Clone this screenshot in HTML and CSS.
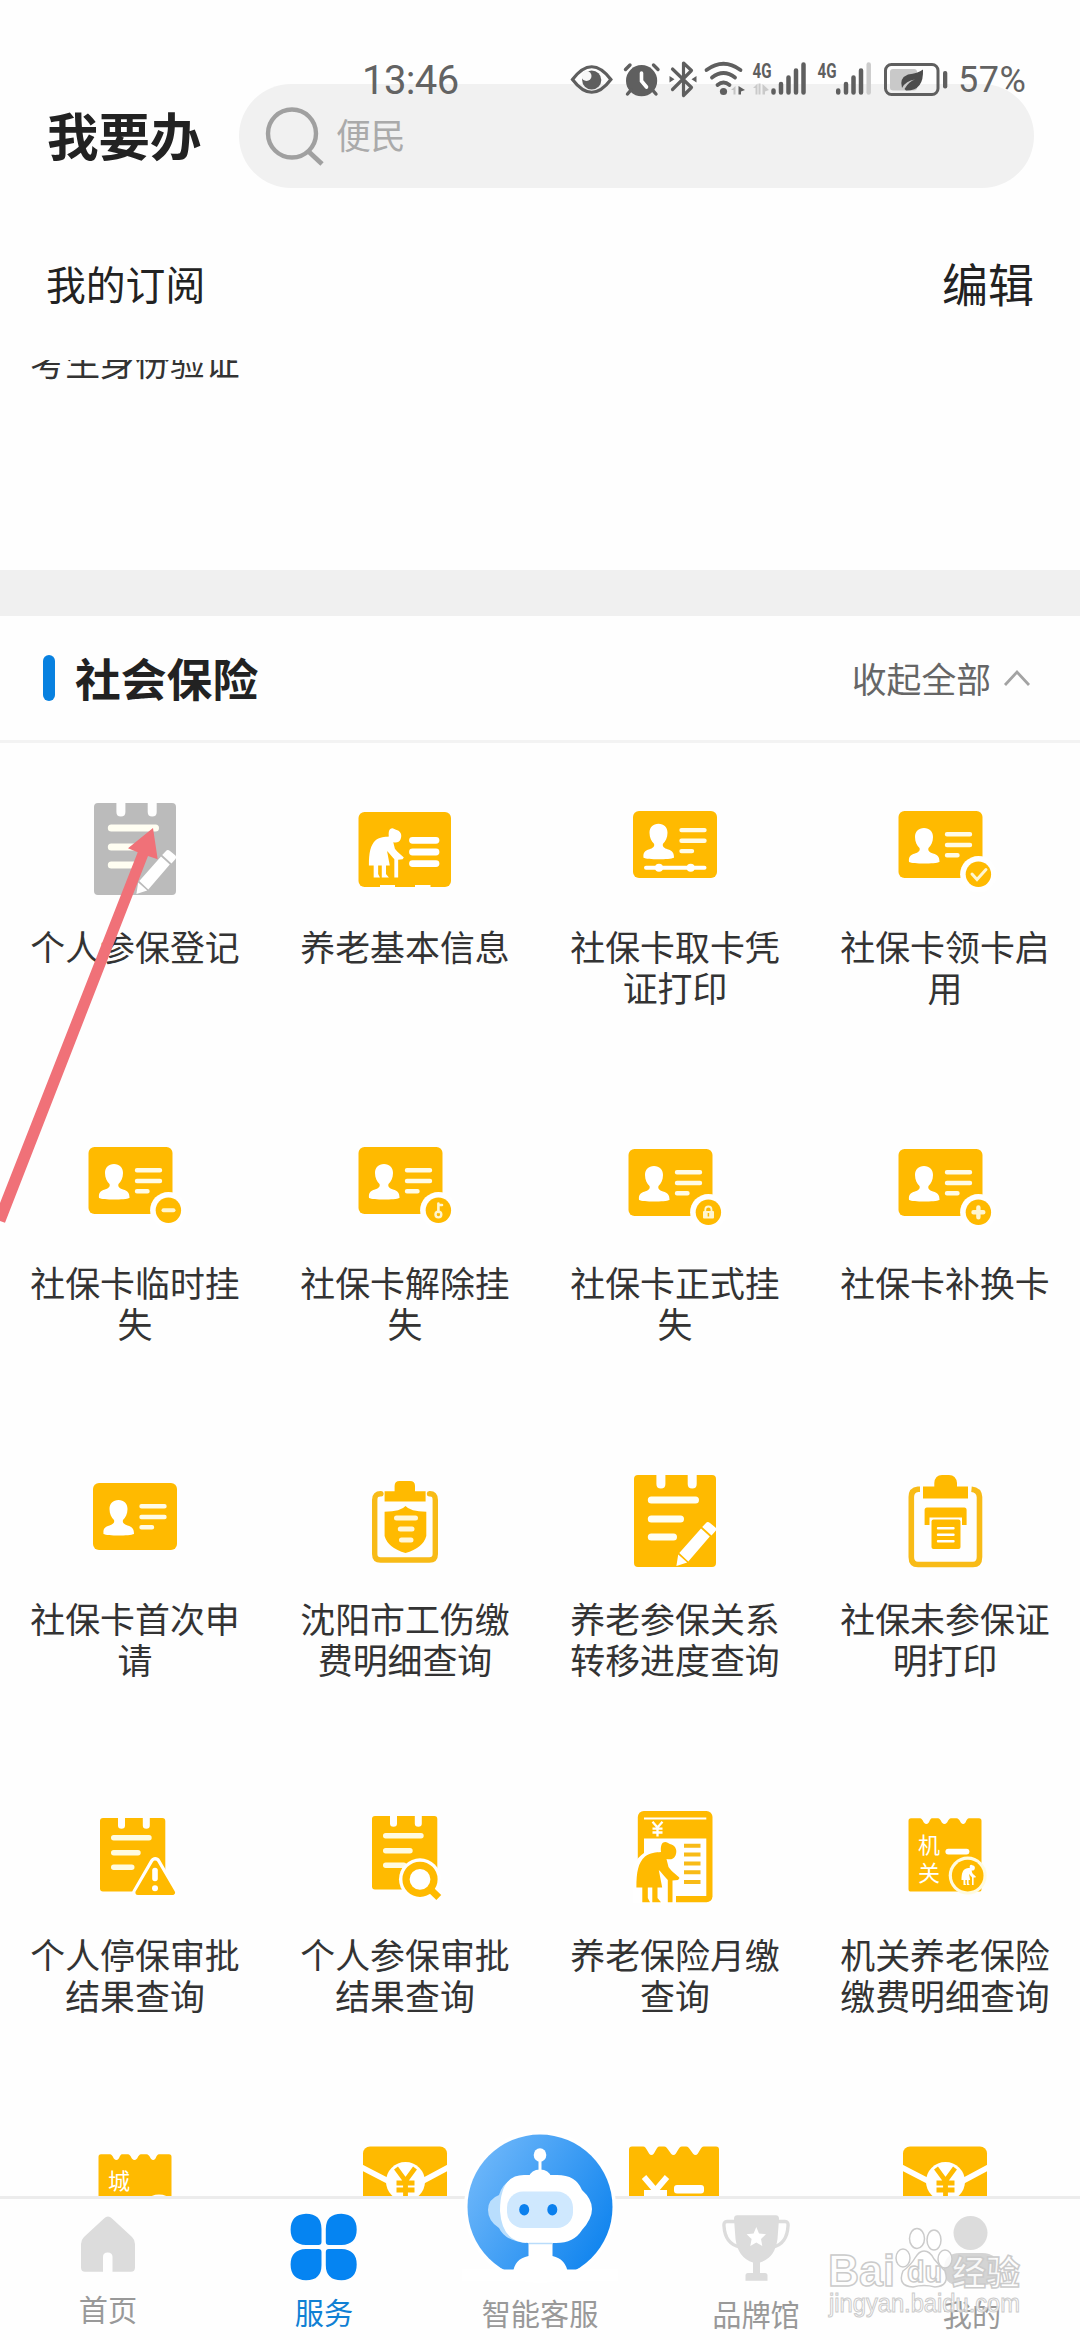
FILE: index.html
```html
<!DOCTYPE html>
<html lang="zh-CN">
<head>
<meta charset="utf-8">
<title>我要办</title>
<link rel="stylesheet" href="styles.css">
</head>
<body>
<svg class="defs" width="0" height="0" aria-hidden="true">
  <defs>
    <path id="bust" d="M26 25C31.500 25 35 28.500 35 34C35 39 33 42.500 30.500 45C29.500 48 32 49.500 35 50.500C40 52 41.500 54 41.500 59C37 61 15 61 11 59C10.500 54 12 52 17 50.500C20 49.500 22.500 48 21.500 45C19 42.500 17 39 17 34C17 28.500 20.500 25 26 25Z"/>
    <path id="idlines" d="M49 31.300H72M49 42H72M49 52.300H59.500" fill="none" stroke="#fffbe6" stroke-width="4.400" stroke-linecap="round"/>
    <g id="idcard">
      <rect x=".5" y="8" width="84" height="67" rx="6" fill="#ffba00"/>
      <use href="#bust" fill="#fff"/><use href="#idlines"/>
    </g>
    <g id="badge">
      <circle cx="80.400" cy="71.300" r="18.300" fill="#fff"/>
      <circle cx="80.400" cy="71.300" r="12.700" fill="#ffba00"/>
    </g>
    <path id="elder" d="M37.500 32C40 32.500 41 34 43.500 34.500C48 36 49.500 41 47.500 45.500C46 49 42.500 50 38.500 49L40.500 57C44 62 49 65 51.500 68L50 70L44.500 70.500V92.300H39.800V70C36 66 33 62 30.800 60L34.200 77.600H29.500V88L33 92.300H24.300V77.600H19.800V88L22 92.300H14.300V77.600H8.400C8.500 62 10 53 17 46.500C22 42.500 28 42.500 33 42C32.500 37 33 32 37.500 32Z"/>
    <g id="notepad">
      <path d="M10 0H28.400V9Q28.400 13.500 32.900 13.500T37.400 9V0H59.700V9Q59.700 13.500 64.200 13.500T68.700 9V0H84Q88 0 88 4V88Q88 92 84 92H10Q6 92 6 88V4Q6 0 10 0Z"/>
      <path d="M23.300 25H67.500M23.300 44H52.500M23.300 62H45.500" fill="none" stroke="#fffef2" stroke-width="7" stroke-linecap="round"/>
      <path d="M50.200 79.500L59.200 87.500L48.400 91ZM51.300 78L73 53.500L81.800 61.500L60.300 86.500ZM74.200 52L78 48Q79.500 46 82 48L87.500 52.500Q89 54 87.500 56L83.500 60.500Z" fill="#fff"/>
    </g>
    <path id="smallpad" d="M15 8H30V15.500Q30 18.800 33.500 18.800T37 15.500V8H54.800V15.500Q54.800 18.800 58.300 18.800T61.800 15.500V8H74.300Q77.300 8 77.300 11V78.500Q77.300 81.500 74.300 81.500H15Q12 81.500 12 78.500V11Q12 8 15 8Z" fill="#ffba00"/>
    <path id="smalllines" d="M25.700 27.700H61M25.700 42.700H50M25.700 57.300H43.800" fill="none" stroke="#fffbe0" stroke-width="5.400" stroke-linecap="round"/>
    <path id="ticket" d="M13 8.300H22C25 8.300 25 14 28.400 14S31.500 8.300 34 8.300H40C43 8.300 43 14 46.500 14S50 8.300 53 8.300H58.500C62 8.300 62 14 65.200 14S68 8.300 71 8.300H81Q83.500 8.300 83.500 11V79Q83.500 81.600 81 81.600H13Q10.500 81.600 10.500 79V11Q10.500 8.300 13 8.300Z" fill="#ffba00"/>
    <g id="envelope">
      <rect x="5" y=".5" width="84" height="90" rx="7" fill="#ffba00"/>
      <path d="M3 21L32 36M91 21L63 36" stroke="#fff" stroke-width="5.500"/>
      <circle cx="47.500" cy="35.500" r="19.500" fill="#fff"/>
      <path d="M38 22L47.500 35L57 22M38.500 37H56.500M38.500 44H56.500M47.500 35V52" fill="none" stroke="#ffba00" stroke-width="4.800"/>
    </g>
    <linearGradient id="ball" x1="0" y1=".2" x2="1" y2=".8"><stop offset="0" stop-color="#70b8fa"/><stop offset="1" stop-color="#0c82ee"/></linearGradient>
  </defs>
</svg>

<div class="screen">
  <header class="top">
    <h1 class="title">我要办</h1>
    <div class="search">
      <svg class="search-icon" viewBox="0 0 60 60"><circle cx="27" cy="27.500" r="24" fill="none" stroke="#a0a0a0" stroke-width="4.400"/><path d="M43 45L57 58" stroke="#a0a0a0" stroke-width="4.800"/></svg>
      <span>便民</span>
    </div>
  </header>
  <div class="subs"><span class="subs-name">我的订阅</span><span class="subs-edit">编辑</span></div>
  <div class="subs-list"><p class="label subs-item">考生身份验证</p></div>
  <div class="band"></div>
  <div class="head">
    <span class="mark"></span>
    <h2>社会保险</h2>
    <span class="fold">收起全部</span>
    <svg class="chev" viewBox="0 0 28 18"><path d="M2 16L14 3L26 16" fill="none" stroke="#a3a3a3" stroke-width="2.800"/></svg>
  </div>

  <main class="grid">
    <div class="cell"><svg class="ico" viewBox="0 0 94 94"><use href="#notepad" fill="#bbb"/></svg><p class="label">个人参保登记</p></div>
    <div class="cell"><svg class="ico" viewBox="0 0 94 94"><rect x=".5" y="9" width="92.500" height="75" rx="6" fill="#ffba00"/><use href="#elder" fill="#fff" transform="translate(4.100 -.8) scale(.81 .815)"/><path d="M54.500 37.300H78M54.500 49H78M54.500 60.600H78" stroke="#fff" stroke-width="6.800" stroke-linecap="round"/><path d="M22 83.300H37M57 83.300H72.500" stroke="#fff" stroke-width="2.600"/></svg><p class="label">养老基本信息</p></div>
    <div class="cell"><svg class="ico" viewBox="0 0 94 94"><rect x="5" y="8" width="84" height="67" rx="6" fill="#ffba00"/><g transform="translate(4.500 -4.200)"><use href="#bust" fill="#fff"/><use href="#idlines"/></g><path d="M18 64.800H76.500" stroke="#fff" stroke-width="4" stroke-linecap="round"/><circle cx="31" cy="64.800" r="4" fill="#fff"/><circle cx="62.700" cy="64.800" r="4" fill="#fff"/></svg><p class="label">社保卡取卡凭证打印</p></div>
    <div class="cell"><svg class="ico" viewBox="0 0 94 94"><use href="#idcard"/><use href="#badge"/><path d="M74 71L79 76.500L88 66.500" fill="none" stroke="#fff6cf" stroke-width="3" stroke-linecap="round"/></svg><p class="label">社保卡领卡启用</p></div>

    <div class="cell"><svg class="ico" viewBox="0 0 94 94"><use href="#idcard"/><use href="#badge"/><path d="M75.500 71.300H85.500" stroke="#fff6cf" stroke-width="4" stroke-linecap="round"/></svg><p class="label">社保卡临时挂失</p></div>
    <div class="cell"><svg class="ico" viewBox="0 0 94 94"><use href="#idcard"/><use href="#badge"/><path d="M80.400 64.500V73M81 66H84" stroke="#fff6cf" stroke-width="2.600" stroke-linecap="round"/><circle cx="80.400" cy="75.500" r="2.900" fill="none" stroke="#fff6cf" stroke-width="2.400"/></svg><p class="label">社保卡解除挂失</p></div>
    <div class="cell"><svg class="ico" viewBox="0 -2 94 94"><use href="#idcard"/><use href="#badge"/><rect x="75" y="70" width="11" height="7.500" rx="1" fill="#fff6cf"/><path d="M77.300 70V68.500Q77.300 65.500 80.400 65.500T83.500 68.500V70" fill="none" stroke="#fff6cf" stroke-width="1.800"/><path d="M80.400 72V75.500" stroke="#ffba00" stroke-width="1.500"/></svg><p class="label">社保卡正式挂失</p></div>
    <div class="cell"><svg class="ico" viewBox="0 -2 94 94"><use href="#idcard"/><use href="#badge"/><path d="M75.500 71.300H85.300M80.400 66.400V76.200" stroke="#fff6cf" stroke-width="4.400" stroke-linecap="round"/></svg><p class="label">社保卡补换卡</p></div>

    <div class="cell"><svg class="ico" viewBox="-4.500 0 94 94"><use href="#idcard"/></svg><p class="label">社保卡首次申请</p></div>
    <div class="cell"><svg class="ico" viewBox="0 0 94 94"><path d="M23 18.800Q16.700 18.500 16.700 25V79Q16.700 85 22.500 85H71.500Q77.300 85 77.300 79V25Q77.300 18.500 71.500 18.800" fill="none" stroke="#f8bb17" stroke-width="5.400" stroke-linecap="round"/><path d="M26.600 16.300H36.600V11Q36.600 6 41.600 6H52Q57 6 57 11V16.300H67.600V26.500H26.600Z" fill="#ffba00"/><path d="M47.500 31Q52 36.500 68.300 36.800V61Q65 73 47.500 78Q30 73 26.600 61V36.800Q43 36.500 47.500 31Z" fill="#ffba00"/><path d="M38.500 43H57.500M42.300 54H54M43.500 65H53" stroke="#fff6d8" stroke-width="5" stroke-linecap="round"/></svg><p class="label">沈阳市工伤缴费明细查询</p></div>
    <div class="cell"><svg class="ico" viewBox="0 0 94 94"><use href="#notepad" fill="#ffba00"/></svg><p class="label">养老参保关系转移进度查询</p></div>
    <div class="cell"><svg class="ico" viewBox="0 0 94 94"><path d="M22 14.300H20Q13.300 15 13.300 22V82Q13.300 89.500 20 89.500H75Q81.500 89.500 81.500 82V22Q81 15 73.500 14.300" fill="none" stroke="#f8bb17" stroke-width="5.600"/><path d="M25 11.500H36.300V8Q37 0 44 0H51Q58 0 59 8V11.500H70V23.400H25Z" fill="#ffba00"/><path d="M29 32.400H66.300Q68.600 32.400 68.600 35V50H64V42.400H31.500V50H26.600V35Q26.600 32.400 29 32.400Z" fill="#ffba00"/><rect x="33.500" y="44.400" width="29" height="29.600" rx="2" fill="#ffba00"/><path d="M40 53.300H55.500M40 59.800H55.500M40 66.300H55.500" stroke="#fff" stroke-width="2.400" stroke-linecap="round"/></svg><p class="label">社保未参保证明打印</p></div>

    <div class="cell"><svg class="ico" viewBox="0 0 94 94"><use href="#smallpad"/><use href="#smalllines"/><path d="M67.200 52.500L84.800 83H49.600Z" fill="#fff" stroke="#fff" stroke-width="11" stroke-linejoin="round"/><path d="M67.200 53L84.500 82.500H49.900Z" fill="#ffba00" stroke="#ffba00" stroke-width="5" stroke-linejoin="round"/><path d="M67 60.500V68.500" stroke="#fff" stroke-width="5.600" stroke-linecap="round"/><circle cx="67" cy="78.300" r="3" fill="#fff"/></svg><p class="label">个人停保审批结果查询</p></div>
    <div class="cell"><svg class="ico" viewBox="0 0 94 94"><g transform="translate(2 -2)"><use href="#smallpad"/><use href="#smalllines"/></g><circle cx="62" cy="69.300" r="21" fill="#fff"/><path d="M73 80L80 87" stroke="#fff" stroke-width="13"/><circle cx="62" cy="69.300" r="14" fill="#fff" stroke="#ffba00" stroke-width="7.200"/><path d="M73 80L80.800 87.500" stroke="#ffba00" stroke-width="7"/></svg><p class="label">个人参保审批结果查询</p></div>
    <div class="cell"><svg class="ico" viewBox="0 0 94 94"><rect x="9.800" y="1" width="74.700" height="91.300" rx="6" fill="#ffba00"/><path d="M16 8.500H78.300" stroke="#fff" stroke-width="2"/><path d="M24.500 11.800L29.500 17.500L34.500 11.800M24.500 18.700H34.500M24.500 22.500H34.500M29.500 17V26.500" fill="none" stroke="#fff" stroke-width="2.300"/><path d="M16 28.600H78.300V86H48V93H5V55Q10 47 16 43Z" fill="#fff"/><use href="#elder" fill="#ffba00"/><path d="M56 35.700H72.500M56 44.600H72.500M56 53.600H72.500M56 62.300H72.500M56 72H72.500" stroke="#f8bb17" stroke-width="4"/></svg><p class="label">养老保险月缴查询</p></div>
    <div class="cell"><svg class="ico" viewBox="0 0 94 94"><use href="#ticket"/><text class="glyph" x="20" y="43">机</text><text class="glyph" x="20" y="70.500">关</text><path d="M50.300 41.600H68.500" stroke="#fff" stroke-width="5.800" stroke-linecap="round"/><circle cx="69.700" cy="65.600" r="19" fill="#fffbe0"/><circle cx="69.700" cy="65.600" r="15.800" fill="#ffba00"/><use href="#elder" fill="#fff" transform="translate(60.700 44) scale(.335)"/></svg><p class="label">机关养老保险缴费明细查询</p></div>

    <div class="cell"><svg class="ico" viewBox="0 0 94 94"><use href="#ticket"/><text class="glyph" x="20" y="43.300">城</text><circle cx="71" cy="67.500" r="19" fill="#fff"/></svg></div>
    <div class="cell"><svg class="ico" viewBox="0 0 94 94"><use href="#envelope"/></svg></div>
    <div class="cell"><svg class="ico" viewBox="0 0 94 94"><path d="M4 .5H15C19 .5 20 9 23.500 9S28 .5 31.500 .5H36C40 .5 42 9 45.500 9S50 .5 54 .5H58C62 .5 64 9 67.500 9S72 .5 76 .5H88Q91 .5 91 3.500V92H1V3.500Q1 .5 4 .5Z" fill="#ffba00"/><path d="M16 31L27.500 44.500L39 31M16 47H39M27.500 44V60" fill="none" stroke="#fff" stroke-width="5.800"/><rect x="46" y="39" width="30" height="8.500" rx="3" fill="#fff"/></svg></div>
    <div class="cell"><svg class="ico" viewBox="0 0 94 94"><use href="#envelope"/></svg></div>
  </main>

  <nav class="nav">
    <div class="tab tab-home"><svg class="tab-ico" viewBox="0 0 72 84"><path d="M36 15.500Q38 15.500 40 17.500L60 36Q63 39 63 43V66.500Q63 70.700 59 70.700H40.500V56Q40.500 51.500 35.700 51.500T31 56V70.700H13Q9 70.700 9 66.500V43Q9 39 12 36L32 17.500Q34 15.500 36 15.500Z" fill="#dcdcdc"/></svg><span>首页</span></div>
    <div class="tab tab-on"><svg class="tab-ico" viewBox="0 0 72 84" fill="#0584f2"><path d="M18 12.700Q33.500 12.700 33.500 28V41Q33.500 44 30.500 44H18Q2.600 43.500 2.600 28.500T18 12.700ZM53.500 12.700Q37.800 12.700 37.800 28V41Q37.800 44 40.800 44H53.500Q68.700 43.500 68.700 28.500T53.500 12.700ZM18 79.300Q33.500 79.300 33.500 64V51Q33.500 48 30.500 48H18Q2.600 48.500 2.600 63.500T18 79.300ZM53.500 79.300Q37.800 79.300 37.800 64V51Q37.800 48 40.800 48H53.500Q68.700 48.500 68.700 63.500T53.500 79.300Z"/></svg><span>服务</span></div>
    <div class="tab tab-bot"><svg class="bot" viewBox="0 0 156 150"><circle cx="78" cy="78" r="76" fill="#fff"/><circle cx="78" cy="78" r="72.500" fill="url(#ball)"/><ellipse cx="78" cy="26" rx="6.300" ry="6.800" fill="#fff"/><path d="M78 30V46" stroke="#fff" stroke-width="3"/><path d="M67 48Q69 40.500 78 40.500T89 48Z" fill="#fff"/><path d="M37 66Q26 70 26 81T37 99Q43 112 64 114V48Q42 48 37 66Z" fill="#b9defd"/><path d="M62 46H95Q114 46 120 61Q130 70 130 80T120 101Q112 114 94 114H67Q40 114 38 82Q38 46 62 46Z" fill="#fff"/><rect x="45" y="62.500" width="66" height="36.500" rx="16" fill="#cfe8fe"/><ellipse cx="62.200" cy="80.700" rx="5" ry="5.800" fill="#0b80ee"/><ellipse cx="90.300" cy="80.700" rx="5" ry="5.800" fill="#0b80ee"/><path d="M66.500 113H90.500V127Q104 130 106 144.500V151H51V144.500Q52 130 66.500 127Z" fill="#fff"/><path d="M67 114.500H90.500" stroke="#b9dcfb" stroke-width="1.500"/><path d="M0 140.500H156V152H0Z" fill="#fff"/></svg><span>智能客服</span></div>
    <div class="tab tab-low"><svg class="tab-ico" viewBox="0 0 72 84"><path d="M16 20.500H7Q3.500 20.500 4 25Q5 43 20 46M57 20.500H65Q68.500 20.500 68 25Q67 43 53 46" fill="none" stroke="#dcdcdc" stroke-width="3.400"/><path d="M17 14.300H56Q59 14.300 59 18L57.500 38Q55 57 40 61.500V72H45Q47.500 72 47.500 74.500V79.700H25.500V74.500Q25.500 72 28 72H33V61.500Q18 57 15.500 38L14 18Q14 14.300 17 14.300Z" fill="#dcdcdc"/><path d="M36.300 26L39 32.500L46 33.200L41 38L42.300 45L36.300 41.500L30.300 45L31.600 38L26.600 33.200L33.600 32.500Z" fill="#fff"/></svg><span>品牌馆</span></div>
    <div class="tab tab-low"><svg class="tab-ico" viewBox="0 0 72 84"><circle cx="34.500" cy="32" r="17" fill="#dcdcdc"/><path d="M24 52H46Q62 52 62 68T48 84H22Q8 84 8 68T24 52Z" fill="#d4d4d4"/></svg><span>我的</span></div>
  </nav>
</div>

<div class="status">
  <span class="time">13:46</span>
  <svg class="sys" viewBox="568 58 384 42" fill="#5f5f5f">
    <path d="M572.500 79.500Q591.700 54 610.900 79.500Q591.700 105 572.500 79.500Z" fill="none" stroke="#5f5f5f" stroke-width="3.200"/>
    <circle cx="591.700" cy="80" r="9.600"/><circle cx="586.500" cy="76" r="5" fill="#f8f8f8"/>
    <circle cx="641.600" cy="80.700" r="15.600"/><path d="M641.500 73V81L646.500 87" fill="none" stroke="#fff" stroke-width="3.600" stroke-linecap="round"/><path d="M625.500 69.500L630 65M658 69.500L653.500 65M631 90L627.500 94M652.500 90L656 94" stroke="#5f5f5f" stroke-width="3.400" stroke-linecap="round"/>
    <path d="M672.500 69L691.500 87.500L683.500 95.500V63L691.500 70.500L672.500 89.500" fill="none" stroke="#5f5f5f" stroke-width="3.200" stroke-linejoin="round" stroke-linecap="round"/><path d="M669.500 76L674.500 79.300L669.500 82.500ZM696.500 76L691.500 79.300L696.500 82.500Z"/>
    <g fill="none" stroke="#5f5f5f" stroke-width="3.800" stroke-linecap="round"><path d="M706.500 70Q723.500 57.500 740.500 70M712 77.500Q723.500 68.500 735 77.500M717.500 85Q723.500 80 729.500 85"/></g>
    <circle cx="723.500" cy="91.500" r="3.600"/><path d="M731 90L735.500 86V94.500H733.500V90Z" fill="#c4c4c4"/><path d="M738.500 86L745 90L741 91.500V94.500H738.500Z"/>
    <text class="net" x="752.500" y="77.500" textLength="19" lengthAdjust="spacingAndGlyphs">4G</text><text class="net" x="817.500" y="77.500" textLength="19" lengthAdjust="spacingAndGlyphs">4G</text>
    <path d="M753 88L757.500 83.500V94.500H755.500V88ZM758.500 83.500H760.500V94.500H758.500ZM762.500 84L769 90L765 91.500V94.500H762.500Z" fill="#cacaca"/>
    <g fill="none" stroke="#5f5f5f" stroke-width="4.500" stroke-linecap="round"><path d="M773.500 90.500V92.500M781 84V92.500M788.500 77.500V92.500M796 70.500V92.500M803.500 64.500V92.500M838.200 90.500V92.500M846 84V92.500M853.500 77.500V92.500M861 70.500V92.500"/><path d="M868.700 64.500V92.500" stroke="#ccc"/></g>
    <rect x="885.500" y="64.500" width="52.500" height="30" rx="6" fill="none" stroke="#5f5f5f" stroke-width="3"/><rect x="890" y="69" width="27" height="21.500" rx="3" fill="#c9c9c9"/><path d="M923 69.500Q924 91 906 90.500L904.500 89Q909 81 915 79.500Q906 80.500 902 88Q899 78 908 74.500Q918 73.500 923 69.500Z" fill="#4c4c4c"/><rect x="943" y="71" width="4.300" height="17.500" rx="2"/>
  </svg>
  <span class="pct">57%</span>
</div>

<svg class="arrow" viewBox="0 0 160 400"><path d="M153 2L157.700 33.300L148 30L5 396.700L0 395V377L137.700 26.300L128 22.300Z" fill="#f07178"/></svg>

<svg class="mark-bd" viewBox="0 0 200 100">
  <g fill="#fff" fill-opacity=".85" stroke="#cbcbcb" stroke-width="1.500">
    <text class="wm-b" x="1" y="63.500" textLength="67" lengthAdjust="spacingAndGlyphs">Bai</text>
    <ellipse cx="76" cy="36" rx="7" ry="9"/><ellipse cx="90" cy="16.500" rx="7.500" ry="10"/><ellipse cx="107" cy="18" rx="7" ry="10"/><ellipse cx="118" cy="37" rx="7" ry="9"/>
    <path d="M97 29Q103 29 107 37Q112 43 118 49Q123 64 108 65Q97 62 86 65Q70 64 76 49Q84 43 88 36Q92 29 97 29Z"/>
    <text class="wm-du" x="80" y="60" textLength="35" lengthAdjust="spacingAndGlyphs">du</text>
    <text class="wm-cn" x="125" y="62.500">经验</text>
    <text class="wm-url" x="2" y="90" textLength="191" lengthAdjust="spacingAndGlyphs">jingyan.baidu.com</text>
  </g>
</svg>
</body>
</html>
```
FILE: styles.css
```css
* { box-sizing: border-box; margin: 0; padding: 0; }
body {
  position: relative;
  width: 1080px;
  height: 2340px;
  overflow: hidden;
  background: #fefefe;
  color: #222;
  font-family: Roboto, "Noto Sans CJK SC", sans-serif;
}
svg { display: block; overflow: visible; }
.defs { position: absolute; }

.screen { display: flex; flex-direction: column; height: 2340px; font-family: "Noto Sans CJK SC", sans-serif; }

.top { display: flex; align-items: center; gap: 39px; padding: 84px 46px 0 47px; }
.title { width: 153px; font-size: 51.5px; line-height: 98px; font-weight: 700; white-space: nowrap; padding-bottom: 4px; }
.search {
  flex: 1;
  height: 104px;
  display: flex;
  align-items: center;
  gap: 11px;
  padding-left: 26px;
  border-radius: 52px;
  background: #f1f1f1;
  color: #aaa;
  font-size: 34.8px;
}
.search-icon { width: 60px; height: 60px; }
.search span { padding-bottom: 4px; }

.subs { height: 172px; display: flex; align-items: center; justify-content: space-between; padding: 16px 46px 0 46px; }
.subs-name { font-size: 39.8px; }
.subs-edit { font-size: 46px; }
.subs-list { height: 210px; overflow: hidden; }
.subs-item { width: 270px; margin-top: -19.5px; }
.band { height: 46px; background: #f0f0f0; }

.head { height: 127px; display: flex; align-items: center; padding: 0 49px 1px 43px; border-bottom: 3px solid #f3f3f3; }
.mark { width: 12px; height: 46px; border-radius: 6px; background: #0881e0; margin-right: 20px; }
.head h2 { flex: 1; font-size: 45.8px; line-height: 50px; font-weight: 700; padding-bottom: 2px; }
.fold { font-size: 34.8px; line-height: 40px; color: #666; margin-right: 12px; }
.chev { width: 28px; height: 18px; }

.grid {
  height: 1453px;
  overflow: hidden;
  display: grid;
  grid-template-columns: repeat(4, 270px);
  grid-auto-rows: 335.8px;
}
.cell { padding-top: 60px; display: flex; flex-direction: column; align-items: center; }
.ico { width: 94px; height: 94px; flex: none; }
.label { width: 212px; font-size: 34.9px; line-height: 41.2px; color: #333; text-align: center; }
.cell .label { margin-top: 29.2px; }
.subs-list .label { width: 270px; }
.glyph { font: 22px "Noto Sans CJK SC", sans-serif; fill: #fff; }

.nav { flex: 1; display: grid; grid-template-columns: repeat(5, 216px); background: #fefefe; border-top: 3px solid #ececec; }
.tab { position: relative; display: flex; flex-direction: column; align-items: center; padding-top: 2px; font-size: 29.2px; line-height: 32px; color: #999; }
.tab-ico { width: 72px; height: 84px; margin-bottom: 10px; }
.tab-home .tab-ico { margin-bottom: 7px; }
.tab-on { color: #1080d4; }
.tab-low .tab-ico { margin-bottom: 12px; }
.bot { position: absolute; left: 30px; top: -70px; width: 156px; height: 150px; }
.tab-bot { padding-top: 97px; }

.status { position: absolute; left: 362px; top: 58px; display: flex; height: 42px; color: #636363; }
.time { width: 206px; font-size: 40px; line-height: 45px; letter-spacing: -.6px; }
.sys { width: 384px; height: 42px; }
.net { font: 700 20px Roboto, sans-serif; }
.pct { margin-left: 6px; font-size: 36px; line-height: 45px; letter-spacing: .5px; }

.arrow { position: absolute; left: 0; top: 826px; width: 160px; height: 400px; }
.mark-bd { position: absolute; left: 827px; top: 2222px; width: 200px; height: 100px; }
.wm-b { font: 700 45px "Liberation Sans", sans-serif; }
.wm-du { font: 700 30px "Liberation Sans", sans-serif; }
.wm-cn { font: 700 34px "Noto Sans CJK SC", sans-serif; }
.wm-url { font: 25px "Liberation Sans", sans-serif; stroke-width: 1px; }
```
